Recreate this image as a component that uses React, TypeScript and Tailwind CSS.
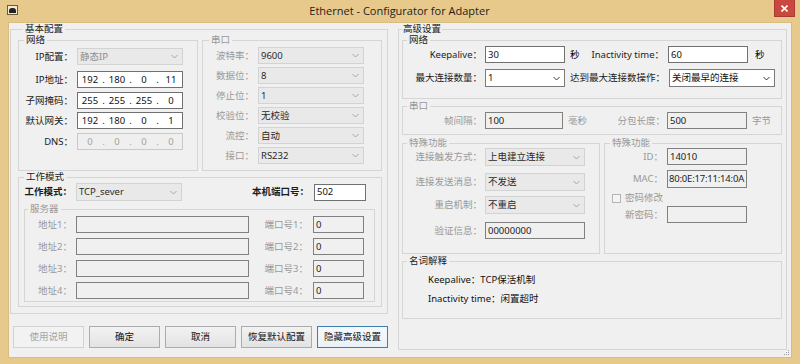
import React from 'react';

type Kind = 'edit' | 'editDim' | 'editOff' | 'combo' | 'comboOff';

const kindCls: Record<Kind, string> = {
  edit: 'bg-white border-[#707070] text-[#111]',
  editDim: 'bg-[#f0f0f0] border-[#808080] text-[#1b1b1b]',
  editOff: 'bg-[#efefef] border-[#c9c9c9] text-[#a3a3a3]',
  combo: 'bg-white border-[#7a7a7a] text-[#111]',
  comboOff: 'bg-[#e9e9e9] border-[#d3d3d3] text-[#2a2a2a]',
};

function Chevron({ dim }: { dim?: boolean }) {
  return (
    <svg width="7" height="5" viewBox="0 0 7 5" className="shrink-0 mr-[4px]">
      <polyline points="0.5,1 3.5,4 6.5,1" fill="none" stroke={dim ? '#a6a6a6' : '#3a3a3a'} strokeWidth="1" />
    </svg>
  );
}

function Box({ className = '', kind, value = '', textCls = '' }: { className?: string; kind: Kind; value?: string; textCls?: string }) {
  const isCombo = kind === 'combo' || kind === 'comboOff';
  return (
    <div className={`shrink-0 flex items-center border pl-[2px] overflow-hidden whitespace-nowrap ${kindCls[kind]} ${className}`}>
      <span className={`flex-1 leading-none ${textCls}`}>{value}</span>
      {isCombo && <Chevron dim={kind === 'comboOff'} />}
    </div>
  );
}

function Label({ className = '', dim, bold, children }: { className?: string; dim?: boolean; bold?: boolean; children: React.ReactNode }) {
  return (
    <div
      className={`shrink-0 flex justify-end whitespace-nowrap leading-none ${dim ? 'text-[#999]' : 'text-[#1b1b1b]'} ${bold ? 'font-bold' : ''} ${className}`}
    >
      {children}
    </div>
  );
}

// Windows style group box: fieldset + legend so the border breaks around the title
function Group({
  title,
  dim,
  className = '',
  legendCls = 'ml-[5px]',
  children,
}: {
  title: string;
  dim?: boolean;
  className?: string;
  legendCls?: string;
  children?: React.ReactNode;
}) {
  return (
    <fieldset className={`shrink-0 min-w-0 border border-[#d5d5d5] ${className}`}>
      <legend className={`px-[2px] text-[9.5px] leading-[10px] ${dim ? 'text-[#999]' : 'text-[#1b1b1b]'} ${legendCls}`}>{title}</legend>
      {children}
    </fieldset>
  );
}

function IpBox({ parts, off }: { parts: string[]; off?: boolean }) {
  return (
    <div
      className={`shrink-0 w-[106px] h-[17px] flex items-center border pl-[1px] leading-none ${
        off ? 'bg-[#efefef] border-[#c9c9c9] text-[#a3a3a3]' : 'bg-white border-[#707070] text-[#111]'
      }`}
    >
      {parts.map((p, i) => (
        <React.Fragment key={i}>
          {i > 0 && <span className="w-[5px] text-center">.</span>}
          <span className="w-[22px] text-center">{p}</span>
        </React.Fragment>
      ))}
    </div>
  );
}

function Btn({ children, kind = 'normal' }: { children: React.ReactNode; kind?: 'normal' | 'off' | 'focus' }) {
  const cls =
    kind === 'off'
      ? 'border-[#d2d2d2] bg-[#f2f2f2] text-[#a5a5a5]'
      : kind === 'focus'
        ? 'border-[#3c7fb1] bg-gradient-to-b from-[#f6f9fc] to-[#e9f1f8] text-[#111]'
        : 'border-[#acacac] bg-gradient-to-b from-[#f2f2f2] to-[#e3e3e3] text-[#111]';
  return <div className={`w-[71px] h-[22px] shrink-0 flex items-center justify-center border leading-none ${cls}`}>{children}</div>;
}

export default function App() {
  return (
    <div className="w-[800px] h-[364px] bg-[#e7c98b] flex flex-col overflow-hidden font-['Noto_Sans','Noto_Sans_CJK_SC',sans-serif] text-[9.5px] select-none">
      {/* title bar */}
      <div className="h-[22px] shrink-0 flex items-start">
        <div className="ml-[7px] mt-[5px] w-[11px] h-[10px] border border-[#6b5a35] bg-[#f4ead2] flex items-end justify-center">
          <div className="w-[7px] h-[5px] bg-[#222] rounded-t-[3px] mb-[1px]" />
        </div>
        <div className="flex-1 h-[22px] pl-[7px] flex items-center justify-center font-['Open_Sans',sans-serif] text-[11px] text-[#1e1e1e]">
          Ethernet - Configurator for Adapter
        </div>
        <div className="w-[21px] h-[17px] mr-[5px] bg-[#c9483f] border border-[#a93a32] border-t-0 flex items-center justify-center">
          <svg width="7" height="7" viewBox="0 0 7 7">
            <path d="M0.5 0.5 L6.5 6.5 M6.5 0.5 L0.5 6.5" stroke="#fff" strokeWidth="1.6" />
          </svg>
        </div>
      </div>

      {/* client */}
      <div className="relative mx-[8px] h-[336px] bg-[#f0f0f0] border border-[#d9bd80] flex">
        {/* left column */}
        <div className="ml-[1px] w-[378px] flex flex-col">
          <Group title="基本配置" className="mt-[1px] h-[290px] pl-[7px]">
            <div className="mt-[1px] flex gap-[4px]">
              <Group title="网络" className="w-[180px] h-[136px]">
                <div className="flex items-center mt-[3px] h-[17px]">
                  <Label className="w-[58px] pr-[4px]">IP配置：</Label>
                  <Box kind="comboOff" className="w-[106px] h-[17px]" value="静态IP" textCls="text-[#8e8e8e]" />
                </div>
                <div className="flex items-center mt-[6px] h-[17px]">
                  <Label className="w-[58px] pr-[4px]">IP地址：</Label>
                  <IpBox parts={['192', '180', '0', '11']} />
                </div>
                <div className="flex items-center mt-[4px] h-[17px]">
                  <Label className="w-[58px] pr-[4px]">子网掩码：</Label>
                  <IpBox parts={['255', '255', '255', '0']} />
                </div>
                <div className="flex items-center mt-[3px] h-[17px]">
                  <Label className="w-[58px] pr-[4px]">默认网关：</Label>
                  <IpBox parts={['192', '180', '0', '1']} />
                </div>
                <div className="flex items-center mt-[4px] h-[17px]">
                  <Label className="w-[58px] pr-[4px]">DNS：</Label>
                  <IpBox parts={['0', '0', '0', '0']} off />
                </div>
              </Group>
              <Group title="串口" dim className="w-[180px] h-[136px]" legendCls="ml-[6px]">
                {[
                  ['波特率：', '9600'],
                  ['数据位：', '8'],
                  ['停止位：', '1'],
                  ['校验位：', '无校验'],
                  ['流控：', '自动'],
                  ['接口：', 'RS232'],
                ].map(([l, v], i) => (
                  <div key={l} className={`flex items-center h-[17px] ${i === 0 ? 'mt-[2px]' : 'mt-[3px]'}`}>
                    <Label dim className="w-[55px] pr-[4px]">{l}</Label>
                    <Box kind="comboOff" className="w-[106px] h-[17px]" value={v} />
                  </div>
                ))}
              </Group>
            </div>

            <Group title="工作模式" className="mt-[1px] w-[364px] h-[135px]">
              <div className="flex items-center mt-[1px] h-[18px] pr-[15px]">
                <Label bold className="w-[57px] pr-[4px]">工作模式：</Label>
                <Box kind="comboOff" className="w-[106px] h-[18px]" value="TCP_sever" />
                <div className="flex-1" />
                <Label bold>本机端口号：</Label>
                <Box kind="edit" className="ml-[5px] w-[52px] h-[17px]" value="502" />
              </div>
              <Group title="服务器" dim className="mt-[3px] ml-[5px] w-[351px] h-[98px]" legendCls="ml-[3px]">
                {['1', '2', '3', '4'].map((n, i) => (
                  <div key={n} className={`flex items-center h-[17px] ${i === 0 ? 'mt-[2px]' : 'mt-[5px]'}`}>
                    <Label dim className="w-[51px] pr-[4px]">{`地址${n}：`}</Label>
                    <Box kind="editDim" className="w-[173px] h-[17px]" />
                    <Label dim className="w-[64px] pr-[5px]">{`端口号${n}：`}</Label>
                    <Box kind="editDim" className="w-[51px] h-[17px]" value="0" />
                  </div>
                ))}
              </Group>
            </Group>
          </Group>

          <div className="mt-[12px] pl-[3px] flex gap-[5px]">
            <Btn kind="off">使用说明</Btn>
            <Btn>确定</Btn>
            <Btn>取消</Btn>
            <Btn>恢复默认配置</Btn>
            <Btn kind="focus">隐藏高级设置</Btn>
          </div>
        </div>

        {/* right column */}
        <div className="ml-[10px] w-[389px] flex flex-col">
          <Group title="高级设置" className="mt-[1px] h-[326px] pl-[3px]" legendCls="ml-0 !px-[1px]">
            <Group title="网络" className="mt-[1px] w-[380px] h-[64px]" legendCls="ml-[4px]">
              <div className="flex items-center h-[17px] mt-[1px]">
                <Label className="w-[82px] pr-[3px]">Keepalive：</Label>
                <Box kind="edit" className="w-[80px] h-[17px]" value="30" />
                <div className="ml-[5px] w-[10px] leading-none">秒</div>
                <Label className="w-[88px] pr-[4px]">Inactivity time：</Label>
                <Box kind="edit" className="w-[80px] h-[17px]" value="60" />
                <div className="ml-[7px] leading-none">秒</div>
              </div>
              <div className="flex items-center h-[18px] mt-[6px]">
                <Label className="w-[82px] pr-[3px]">最大连接数量：</Label>
                <Box kind="combo" className="w-[80px] h-[18px]" value="1" />
                <Label className="ml-[5px] w-[99px] pr-[4px]">达到最大连接数操作：</Label>
                <Box kind="combo" className="w-[106px] h-[18px]" value="关闭最早的连接" />
              </div>
            </Group>

            <Group title="串口" dim className="mt-[2px] w-[380px] h-[34px]" legendCls="ml-[4px]">
              <div className="flex items-center h-[17px] mt-[1px]">
                <Label dim className="w-[82px] pr-[3px]">帧间隔：</Label>
                <Box kind="editDim" className="w-[78px] h-[17px]" value="100" />
                <div className="ml-[5px] w-[20px] leading-none text-[#999]">毫秒</div>
                <Label dim className="w-[79px] pr-[2px]">分包长度：</Label>
                <Box kind="editDim" className="w-[80px] h-[17px]" value="500" />
                <div className="ml-[5px] leading-none text-[#999]">字节</div>
              </div>
            </Group>

            <div className="mt-[3px] flex gap-[4px]">
              <Group title="特殊功能" dim className="w-[198px] h-[116px]" legendCls="ml-[4px]">
                <div className="flex items-center h-[18px] mt-0">
                  <Label dim className="w-[82px] pr-[3px]">连接触发方式：</Label>
                  <Box kind="comboOff" className="w-[100px] h-[18px]" value="上电建立连接" />
                </div>
                <div className="flex items-center h-[18px] mt-[7px]">
                  <Label dim className="w-[82px] pr-[3px]">连接发送消息：</Label>
                  <Box kind="comboOff" className="w-[100px] h-[18px]" value="不发送" />
                </div>
                <div className="flex items-center h-[18px] mt-[5px]">
                  <Label dim className="w-[82px] pr-[3px]">重启机制：</Label>
                  <Box kind="comboOff" className="w-[100px] h-[18px]" value="不重启" />
                </div>
                <div className="flex items-center h-[17px] mt-[8px]">
                  <Label dim className="w-[82px] pr-[3px]">验证信息：</Label>
                  <Box kind="editDim" className="w-[100px] h-[17px]" value="00000000" />
                </div>
              </Group>
              <Group title="特殊功能" dim className="w-[178px] h-[116px]" legendCls="ml-[5px]">
                <div className="flex items-center h-[17px] mt-0">
                  <Label dim className="w-[62px] pr-[4px]">ID：</Label>
                  <Box kind="editDim" className="w-[80px] h-[17px]" value="14010" />
                </div>
                <div className="flex items-center h-[18px] mt-[5px]">
                  <Label dim className="w-[62px] pr-[4px]">MAC：</Label>
                  <Box kind="editDim" className="w-[80px] h-[18px] !pl-[1px] tracking-[-0.2px]" value="80:0E:17:11:14:0A" />
                </div>
                <div className="flex items-center h-[10px] mt-[5px] pl-[7px]">
                  <div className="w-[9px] h-[9px] border border-[#b5b5b5] bg-[#f4f4f4]" />
                  <div className="ml-[4px] leading-none text-[#999]">密码修改</div>
                </div>
                <div className="flex items-center h-[17px] mt-[3px]">
                  <Label dim className="w-[62px] pr-[4px]">新密码：</Label>
                  <Box kind="editDim" className="w-[80px] h-[17px]" />
                </div>
              </Group>
            </div>

            <Group title="名词解释" className="mt-[2px] w-[380px] h-[63px]" legendCls="ml-[4px]">
              <div className="pl-[25px] mt-[7px] h-[14px] flex items-center leading-none text-[#111]">Keepalive：TCP保活机制</div>
              <div className="pl-[25px] mt-[5px] h-[14px] flex items-center leading-none text-[#111]">Inactivity time：闲置超时</div>
            </Group>
          </Group>
        </div>

        {/* resize grip */}
        <svg width="7" height="7" viewBox="0 0 7 7" className="absolute right-[1px] bottom-[1px]">
          <rect x="5" y="1" width="1" height="1" fill="#a0a0a0" />
          <rect x="3" y="3" width="1" height="1" fill="#a0a0a0" />
          <rect x="5" y="3" width="1" height="1" fill="#a0a0a0" />
          <rect x="1" y="5" width="1" height="1" fill="#a0a0a0" />
          <rect x="3" y="5" width="1" height="1" fill="#a0a0a0" />
          <rect x="5" y="5" width="1" height="1" fill="#a0a0a0" />
        </svg>
      </div>
    </div>
  );
}
